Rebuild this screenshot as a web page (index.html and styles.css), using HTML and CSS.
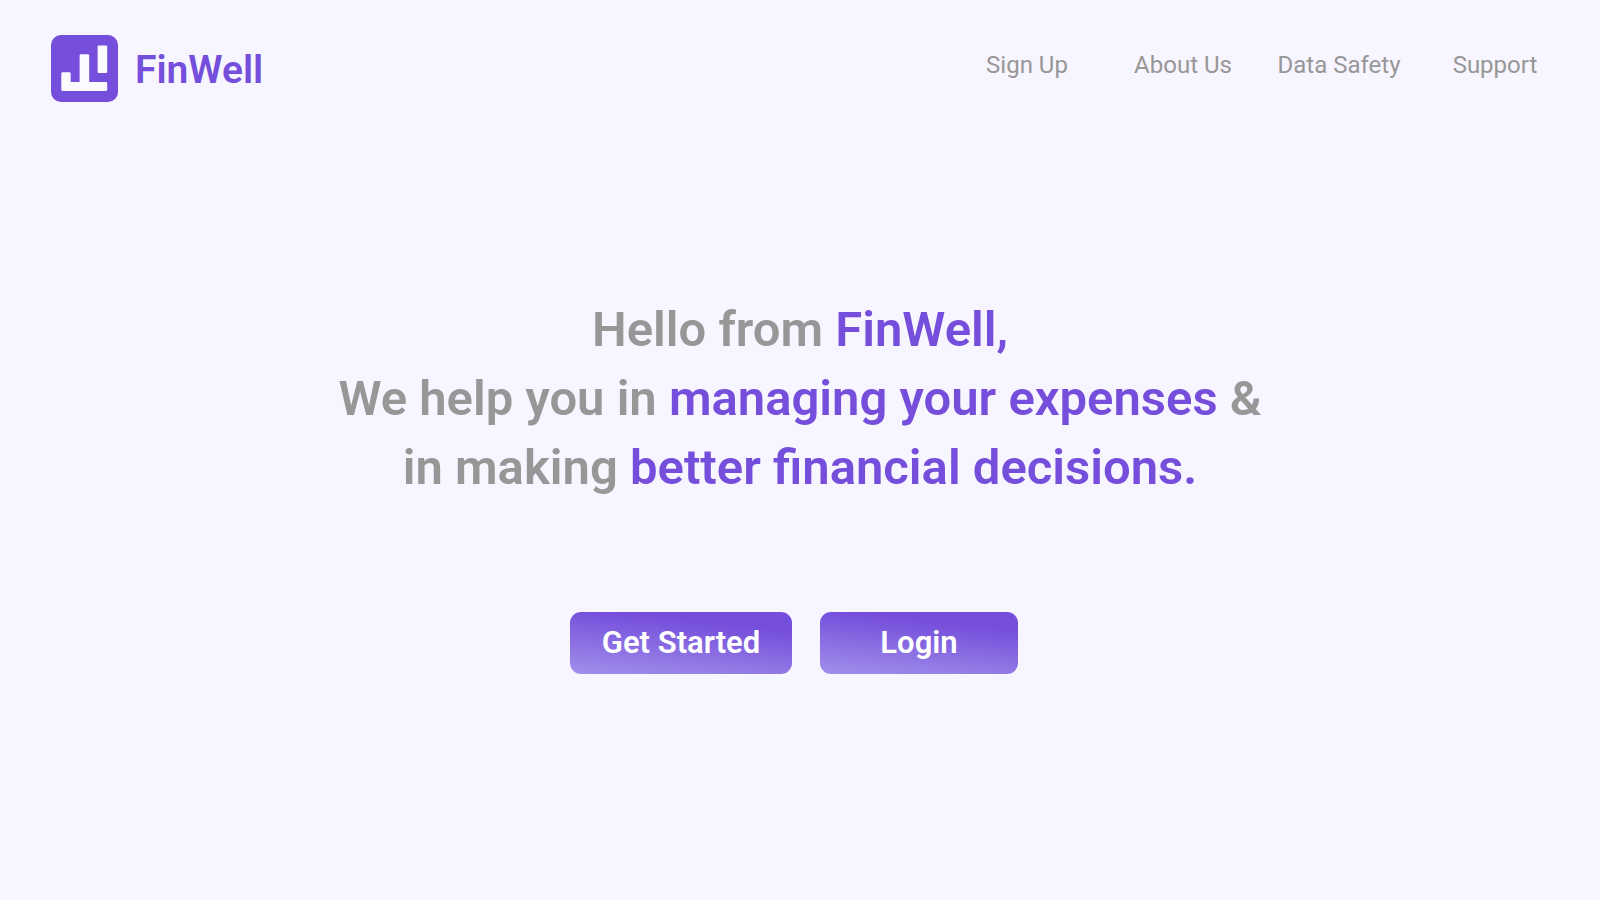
FILE: index.html
```html
<!DOCTYPE html>
<html lang="en">
<head>
<meta charset="utf-8">
<meta name="viewport" content="width=device-width, initial-scale=1">
<title>FinWell</title>
<link rel="stylesheet" href="styles.css">
</head>
<body>
<header class="header">
  <a class="brand" href="#">
    <svg class="brand-mark" viewBox="0 0 67 67" aria-hidden="true">
      <rect width="67" height="67" rx="10" fill="#754edb"/>
      <path d="M11.5 37.3H18.5Q19.7 37.3 19.7 38.5V47H28.6V20.5Q28.6 19.3 29.8 19.3H37Q38.2 19.3 38.2 20.5V47H55Q56.2 47 56.2 48.2V54.8Q56.2 56 55 56H11.5Q10.3 56 10.3 54.8V38.5Q10.3 37.3 11.5 37.3Z" fill="#fbfaff"/>
      <rect x="46.6" y="10.4" width="9.6" height="27.6" rx="1.2" fill="#fbfaff"/>
    </svg>
    <span class="brand-name">FinWell</span>
  </a>
  <nav class="nav" aria-label="Main">
    <a class="nav-link" href="#">Sign Up</a>
    <a class="nav-link" href="#">About Us</a>
    <a class="nav-link" href="#">Data Safety</a>
    <a class="nav-link" href="#">Support</a>
  </nav>
</header>
<main class="hero">
  <h1 class="headline">Hello from <span class="accent">FinWell,</span><br>We help you in <span class="accent">managing your expenses</span> &amp;<br>in making <span class="accent">better financial decisions.</span></h1>
  <div class="actions">
    <button class="button button-wide" type="button">Get Started</button>
    <button class="button" type="button">Login</button>
  </div>
</main>
</body>
</html>
```

FILE: styles.css
```css
* {
  box-sizing: border-box;
}

body {
  margin: 0;
  min-height: 100vh;
  background: #f7f5ff;
  color: #979797;
  font-family: Roboto, "Liberation Sans", sans-serif;
}

.header {
  display: flex;
  align-items: center;
  justify-content: space-between;
  padding: 35px 27px 0 51px;
}

.brand {
  display: flex;
  align-items: center;
  gap: 17px;
  color: #754edb;
  text-decoration: none;
}

.brand-mark {
  width: 67px;
  height: 67px;
}

.brand-name {
  padding-top: 2px;
  font-size: 39px;
  font-weight: 600;
  line-height: 48px;
}

.nav {
  display: grid;
  grid-template-columns: repeat(4, 156px);
  padding-bottom: 8px;
}

.nav-link {
  color: #979797;
  font-size: 24px;
  line-height: 32px;
  text-align: center;
  text-decoration: none;
}

.hero {
  display: flex;
  flex-direction: column;
  align-items: center;
  padding: 193px 24px 48px;
}

.headline {
  margin: 0;
  font-size: 49px;
  font-weight: 600;
  line-height: 69px;
  text-align: center;
}

.accent {
  color: #754edb;
}

.actions {
  display: flex;
  gap: 28px;
  margin: 110px 12px 0 0;
}

.button {
  width: 198px;
  height: 62px;
  padding: 0;
  border: 0;
  border-radius: 11px;
  background: linear-gradient(186deg, #754edb 22%, #a18fea 100%);
  color: #fff;
  font: 600 31px/40px Roboto, "Liberation Sans", sans-serif;
  cursor: pointer;
}

.button-wide {
  width: 222px;
}
```
